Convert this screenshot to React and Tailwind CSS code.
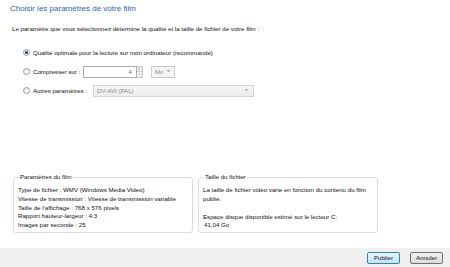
import React from 'react';

// Small radio bullet, Windows 7 look
function Radio({ checked }) {
  return (
    <span className="w-[7px] h-[7px] rounded-full border border-[#9a9b9b] bg-gradient-to-br from-[#e6e6e6] to-[#ffffff] flex items-center justify-center shrink-0">
      {checked && <span className="w-[3px] h-[3px] rounded-full bg-[#1b3a5c]" />}
    </span>
  );
}

function Arrow({ className = '' }) {
  return (
    <svg width="5" height="3" viewBox="0 0 5 3" className={className}>
      <path d="M0.5 0 L4.5 0 L2.5 2.5 Z" fill="#b0b0b0" />
    </svg>
  );
}

function GroupBox({ title, children }) {
  return (
    <fieldset className="w-[180px] h-[60px] border border-[#d5dfe5] rounded-[3px] px-[4px] pt-[1px]">
      <legend className="px-[1px] ml-[1px] leading-[8px]">{title}</legend>
      {children}
    </fieldset>
  );
}

export default function App() {
  const filmParams = [
    'Type de fichier : WMV (Windows Media Video)',
    'Vitesse de transmission : Vitesse de transmission variable',
    "Taille de l'affichage : 768 x 576 pixels",
    'Rapport hauteur-largeur : 4:3',
    'Images par seconde : 25',
  ];

  return (
    <div
      className="w-[450px] h-[267px] bg-white flex flex-col text-[6.15px] text-[#111] whitespace-nowrap overflow-hidden"
      style={{ fontFamily: '"Liberation Sans", Arial, sans-serif' }}
    >
      <h1 className="pl-[10px] pt-[4px] h-[20px] text-[8px] leading-[10px] text-[#2a64b0]">
        Choisir les paramètres de votre film
      </h1>

      <p className="pl-[12px] pt-[5px] leading-[8px]">
        Le paramètre que vous sélectionnez détermine la qualité et la taille de fichier de votre film :
      </p>

      <div className="pl-[23px] pt-[10px] flex flex-col">
        {/* option 1 */}
        <div className="h-[19px] flex items-center gap-[3px]">
          <Radio checked />
          <span>Qualité optimale pour la lecture sur mon ordinateur (recommandé)</span>
        </div>

        {/* option 2 */}
        <div className="h-[19px] flex items-center">
          <Radio />
          <span className="ml-[3px] w-[50px] shrink-0">Compresser sur :</span>
          <div className="w-[54px] h-[12px] border border-[#abadb3] bg-white flex items-center justify-end pr-[4px] text-[#6d6d6d]">
            4
          </div>
          <div className="w-[6px] h-[12px] flex flex-col border border-l-0 border-[#c5c5c5] bg-[#f2f2f2]">
            <div className="flex-1 flex items-center justify-center border-b border-[#d0d0d0]">
              <Arrow className="rotate-180 scale-75" />
            </div>
            <div className="flex-1 flex items-center justify-center">
              <Arrow className="scale-75" />
            </div>
          </div>
          <div className="ml-[8px] w-[24px] h-[12px] border border-[#c9c9c9] bg-[#f4f4f4] flex items-center justify-between pl-[3px] pr-[3px] text-[#8a8a8a]">
            <span>Mo</span>
            <Arrow />
          </div>
        </div>

        {/* option 3 */}
        <div className="h-[19px] flex items-center">
          <Radio />
          <span className="ml-[3px] w-[60px] shrink-0">Autres paramètres :</span>
          <div className="w-[161px] h-[12px] border border-[#d4d4d4] bg-gradient-to-b from-[#f6f6f6] to-[#ececec] flex items-center justify-between pl-[3px] pr-[4px] text-[#8a8a8a]">
            <span>DV-AVI (PAL)</span>
            <Arrow />
          </div>
        </div>
      </div>

      <div className="flex-1" />

      <div className="pl-[13px] flex gap-[5px] leading-[8.8px]">
        <GroupBox title="Paramètres du film">
          <div className="pt-[4px] flex flex-col">
            {filmParams.map(l => (
              <span key={l}>{l}</span>
            ))}
          </div>
        </GroupBox>
        <GroupBox title="Taille du fichier">
          <div className="pt-[4px] flex flex-col">
            <span>La taille de fichier vidéo varie en fonction du contenu du film</span>
            <span>publié.</span>
            <span className="mt-[9px]">Espace disque disponible estimé sur le lecteur C:</span>
            <span className="pl-[1px]">41,04 Go</span>
          </div>
        </GroupBox>
      </div>

      <div className="mt-[15px] h-[19px] bg-[#f0f0f0] flex items-center justify-end pr-[7px] gap-[10px]">
        <button className="w-[33px] h-[12px] rounded-[2px] border border-[#3c7fb1] bg-gradient-to-b from-[#eaf6fd] to-[#bee6fd] text-[6.15px] leading-[10px] text-[#111]">
          Publier
        </button>
        <button className="w-[33px] h-[12px] rounded-[2px] border border-[#707070] bg-gradient-to-b from-[#f2f2f2] to-[#dddddd] text-[6.15px] leading-[10px] text-[#111]">
          Annuler
        </button>
      </div>
    </div>
  );
}
